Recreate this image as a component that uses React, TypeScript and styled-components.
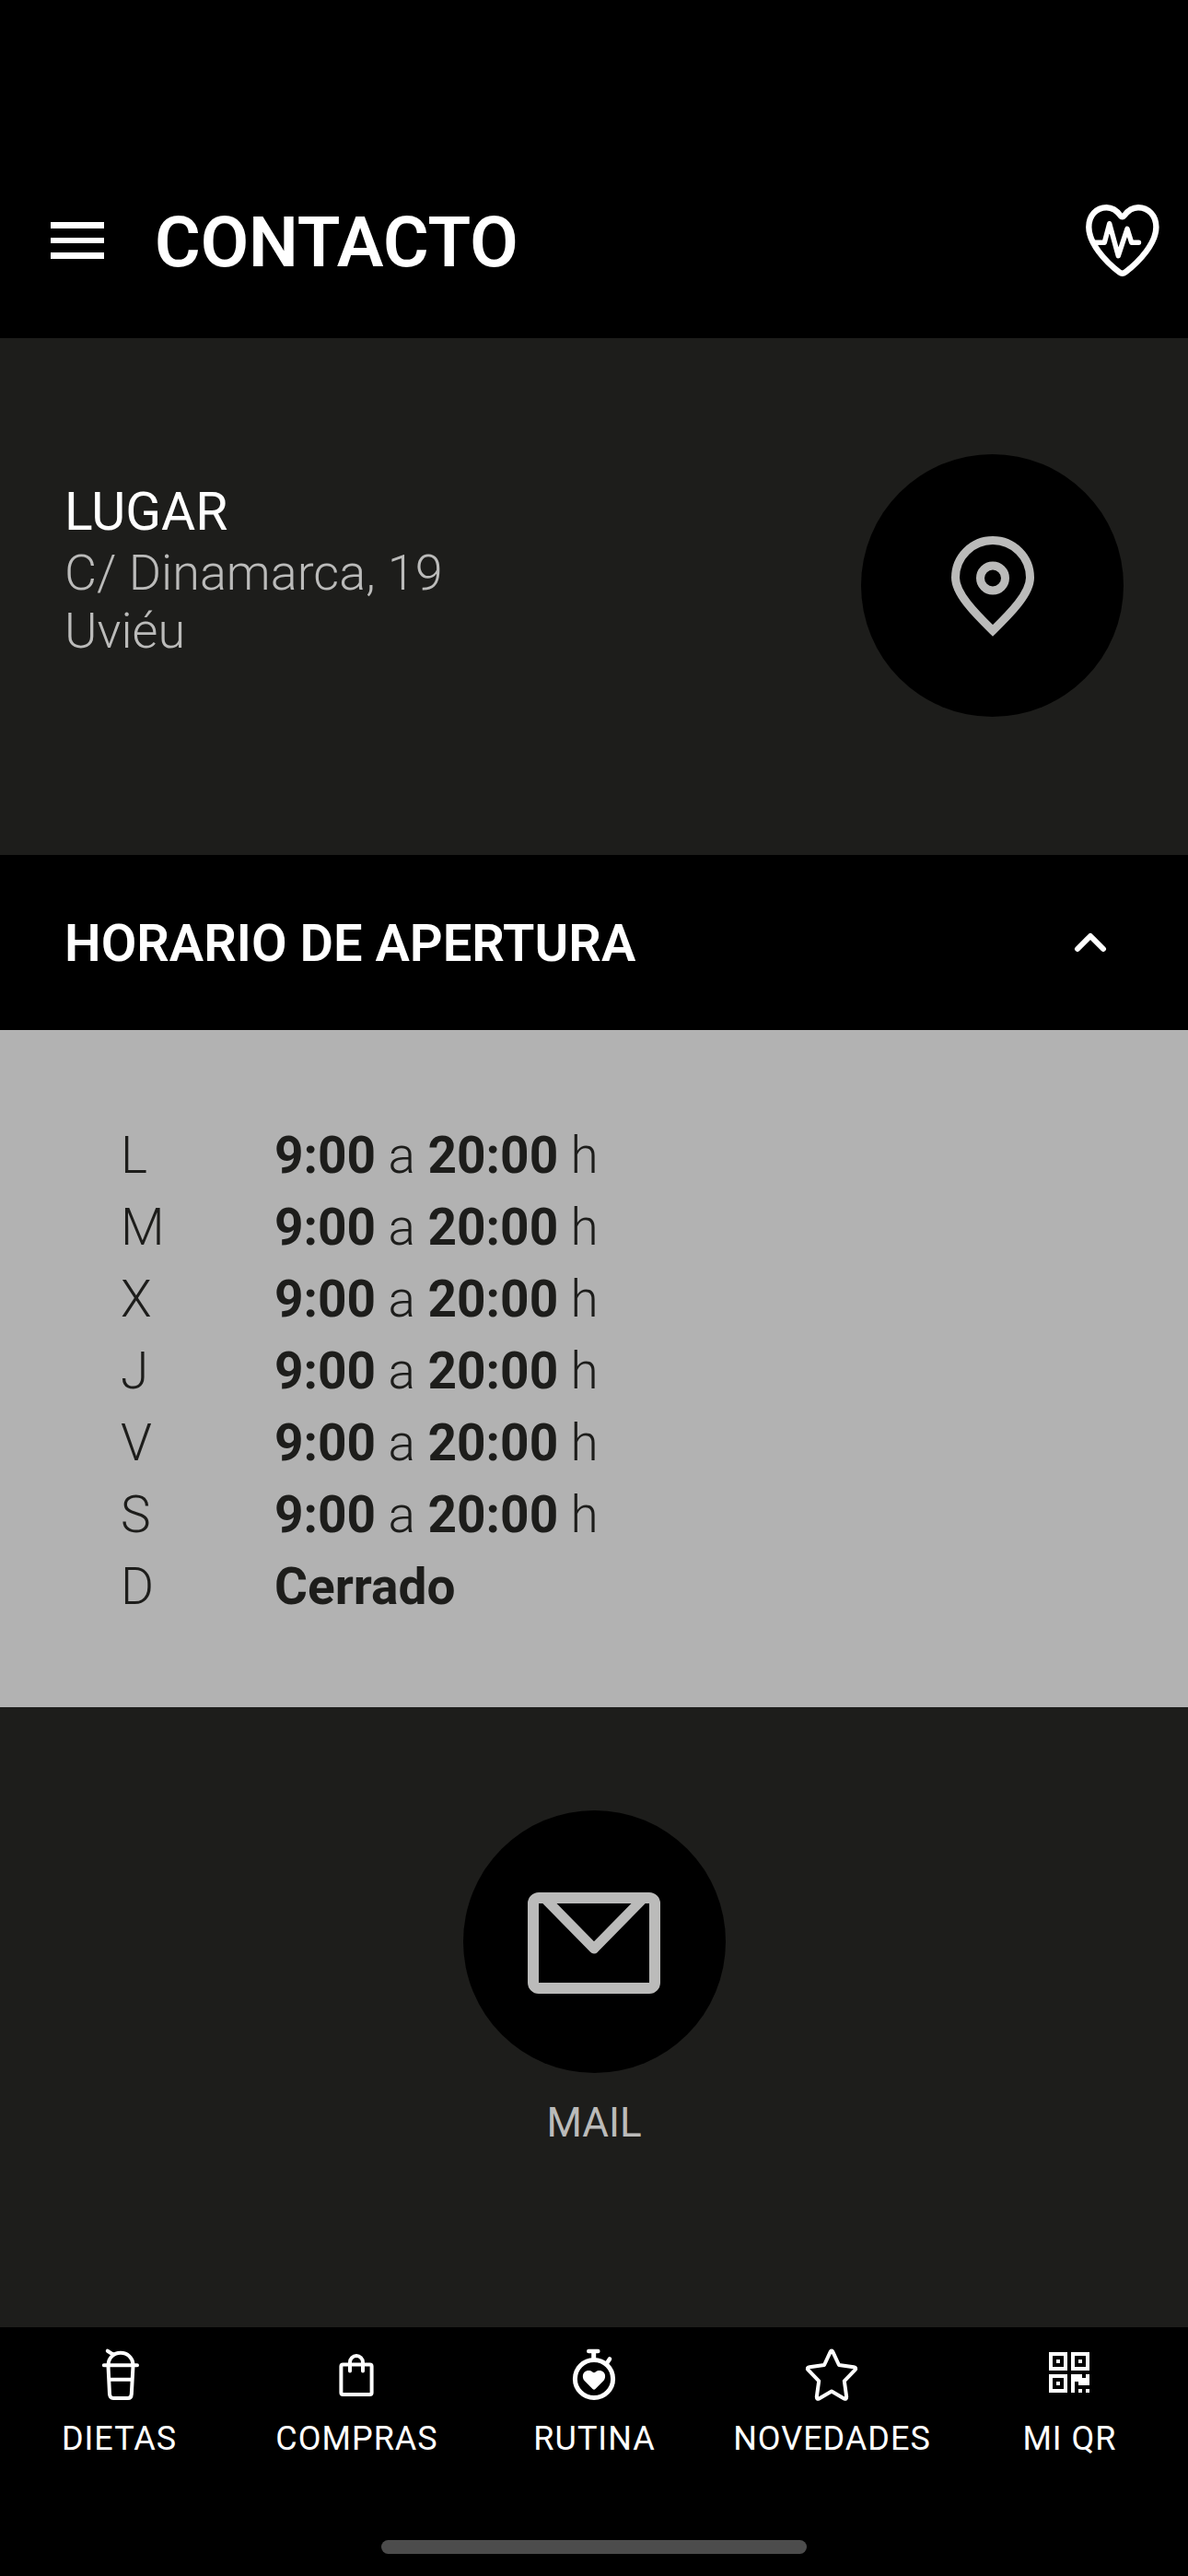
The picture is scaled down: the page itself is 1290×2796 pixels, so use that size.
import React, { useState } from "react";
import styled, { createGlobalStyle } from "styled-components";

const color = {
  black: "#000000",
  panel: "#1d1d1b",
  silver: "#b2b2b2",
  muted: "#bbbbba",
  white: "#ffffff",
  handle: "#4c4c4c",
};

const GlobalStyle = createGlobalStyle`
  *, *::before, *::after { box-sizing: border-box; }
  body {
    margin: 0;
    background: ${color.black};
    font-family: Roboto, "Open Sans", sans-serif;
  }
  button { font: inherit; color: inherit; background: none; border: 0; padding: 0; cursor: pointer; }
  a { color: inherit; text-decoration: none; }
  svg { display: block; flex: none; }
`;

const Screen = styled.div`
  display: flex;
  flex-direction: column;
  min-height: 100vh;
  background: ${color.panel};
`;

const Header = styled.header`
  display: flex;
  align-items: center;
  gap: 55px;
  padding: 207px 31px 52px 55px;
  background: ${color.black};
  color: ${color.white};
`;

const Title = styled.h1`
  flex: 1;
  margin: 0;
  padding-top: 4px;
  font-size: 76px;
  line-height: 104px;
  font-weight: 600;
`;

const Main = styled.main`
  flex: 1;
`;

const Place = styled.section`
  display: flex;
  align-items: flex-start;
  justify-content: space-between;
  padding: 126px 70px 150px;
`;

const PlaceText = styled.div`
  padding-top: 31px;
  font-size: 54px;
  line-height: 63px;
`;

const PlaceHeading = styled.h2`
  margin: 0 0 3px;
  font-size: 57px;
  font-weight: 400;
  color: ${color.white};
`;

const Address = styled.address`
  font-style: normal;
  font-weight: 300;
  color: ${color.muted};
`;

const Disc = styled.span`
  display: flex;
  align-items: center;
  justify-content: center;
  width: 285px;
  height: 285px;
  padding-top: 2px;
  border-radius: 50%;
  background: ${color.black};
  color: ${color.muted};
`;

const AccordionHeading = styled.h2`
  margin: 0;
  background: ${color.black};
`;

const AccordionButton = styled.button`
  display: flex;
  align-items: center;
  justify-content: space-between;
  width: 100%;
  padding: 60px 70px 58px;
  color: ${color.white};
  font-size: 56px;
  line-height: 72px;
  font-weight: 600;
  text-align: left;
`;

const Schedule = styled.div`
  padding: 97px 131px 92px;
  background: ${color.silver};
`;

const HoursTable = styled.table`
  border-collapse: collapse;
  color: ${color.panel};
  font-size: 55px;
  line-height: 78px;
  font-weight: 300;
`;

const Day = styled.th`
  width: 167px;
  padding: 0;
  font-weight: inherit;
  text-align: left;
`;

const Hours = styled.td`
  padding: 0;

  strong { font-weight: 700; }
`;

const Mail = styled.section`
  display: flex;
  justify-content: center;
  padding: 112px 70px;
`;

const MailLink = styled.a`
  display: flex;
  flex-direction: column;
  align-items: center;
  gap: 28px;
  color: ${color.muted};
  font-size: 44px;
  line-height: 52px;
`;

const Footer = styled.footer`
  padding: 21px 0 24px;
  background: ${color.black};
`;

const Tabs = styled.nav`
  display: grid;
  grid-template-columns: repeat(5, 1fr);
  margin-bottom: 88px;
`;

const Tab = styled.a`
  display: flex;
  flex-direction: column;
  align-items: center;
  gap: 18px;
  color: ${color.white};
  font-size: 36px;
  line-height: 44px;
  letter-spacing: 1px;
  text-indent: 1px;
`;

const HomeHandle = styled.div`
  width: 462px;
  height: 15px;
  margin: 0 auto;
  border-radius: 8px;
  background: ${color.handle};
`;

const MenuIcon = () => (
  <svg width="58" height="40" viewBox="0 0 58 40" fill="currentColor" aria-hidden="true">
    <path d="M0 0h58v7H0zM0 17h58v6H0zM0 33h58v7H0z" />
  </svg>
);

const HeartPulseIcon = () => (
  <svg width="80" height="80" viewBox="0 0 80 80" fill="none" stroke="currentColor" strokeLinecap="round" strokeLinejoin="round" aria-hidden="true">
    <path
      strokeWidth="6.4"
      d="M37.6 13C33 6.600 28.500 4.200 22.500 4.200 11.500 4.200 3.300 13 3.300 25.500 3.300 43 21 62.500 36.500 74.500Q39.700 77 42.900 74.500C58.500 62.500 76.400 43 76.400 25.500 76.400 13 68 4.200 57 4.200 51 4.200 46.400 6.600 41.800 13Q39.700 15.800 37.600 13Z"
    />
    <path strokeWidth="5.4" d="M9.500 42.300H20.300L25.700 21.700 35.300 56.700 45 27.300 49.700 42.300H57.500" />
  </svg>
);

const PinIcon = () => (
  <svg width="90" height="109" viewBox="0 0 90 109" fill="none" stroke="currentColor" strokeWidth="9" aria-hidden="true">
    <path d="M45 102.500C25 83 4.500 62 4.500 45a40.500 40.500 0 0 1 81 0C85.500 62 65 83 45 102.500Z" />
    <circle cx="45" cy="45.500" r="13.500" />
  </svg>
);

const MailIcon = () => (
  <svg width="144" height="110" viewBox="0 0 144 110" fill="none" stroke="currentColor" strokeWidth="11" strokeLinejoin="round" aria-hidden="true">
    <path
      fill="currentColor"
      stroke="none"
      fillRule="evenodd"
      d="M12 0H132A12 12 0 0 1 144 12V98A12 12 0 0 1 132 110H12A12 12 0 0 1 0 98V12A12 12 0 0 1 12 0ZM12 12V98H132V12Z"
    />
    <path d="M18 6 72 61 126 6" />
  </svg>
);

const Chevron = ({ open }: { open: boolean }) => (
  <svg width="72" height="72" viewBox="0 0 72 72" fill="none" stroke="currentColor" strokeWidth="6" strokeLinecap="round" strokeLinejoin="round" aria-hidden="true">
    <path d={open ? "M22 42 36 28 50 42" : "M22 28 36 42 50 28"} />
  </svg>
);

const TabIcon = ({ children }: { children: React.ReactNode }) => (
  <svg width="60" height="60" viewBox="0 0 60 60" fill="none" stroke="currentColor" strokeWidth="4" strokeLinecap="round" strokeLinejoin="round" aria-hidden="true">
    {children}
  </svg>
);

const CupIcon = () => (
  <TabIcon>
    <path d="M13.800 20.300H50M18.500 19.500C19 12 24.500 6.800 32 6.800S45 12 45.600 19.500M17.800 4.700 24 8.700" />
    <path d="M18.500 21 20 51.500Q20.300 56 24 56H40Q43.500 56 43.800 51.500L45.500 21M19.500 35.700H44.500" />
  </TabIcon>
);

const BagIcon = () => (
  <TabIcon>
    <rect x="13.400" y="19.400" width="33.200" height="32.600" rx="2" />
    <path d="M23 26.500V17a7 7 0 0 1 14 0v9.500" />
  </TabIcon>
);

const StopwatchIcon = () => (
  <TabIcon>
    <circle cx="30" cy="35" r="20.600" strokeWidth="5" />
    <path d="M24.300 5H34.300M47 13.500 43.800 18.200" strokeWidth="4.600" />
    <path d="M29.700 6V13" strokeWidth="5" />
    <path
      fill="currentColor"
      stroke="none"
      d="M28.500 46 19.600 37C17.300 34.500 17.300 30 19.600 27.700 22 25.300 26 25.400 28 27.300Q30 29.300 32 27.300C34 25.400 38 25.300 40.400 27.700 42.700 30 42.700 34.500 40.400 37L31.500 46Q30 47.500 28.500 46Z"
    />
  </TabIcon>
);

const StarIcon = () => (
  <TabIcon>
    <path d="M28.600 5.800Q30 3.200 31.400 5.800L38 20 54 22.300Q57.500 23 55.400 25.300L43.800 37.300 46.200 54.600Q46.200 57.600 43.600 56.400L30 48.600 16.400 56.400Q13.800 57.600 13.800 54.600L16.200 37.300 4.600 25.300Q2.500 23 6 22.300L22 20Z" />
  </TabIcon>
);

const QrIcon = () => (
  <TabIcon>
    <path
      fill="currentColor"
      stroke="none"
      fillRule="evenodd"
      d="M8 6h20v20H8zm4 4v12h12V10zm4 4h4v4h-4zM32 6h20v20H32zm4 4v12h12V10zm4 4h4v4h-4zM8 30h20v20H8zm4 4v12h12V34zm4 4h4v4h-4zM32 30h12v4h4v-4h4v12H40v-4h-4v12h-4zM40 46h4v4h-4zM48 46h4v4h-4z"
    />
  </TabIcon>
);

const openDays = ["L", "M", "X", "J", "V", "S"];

const tabs = [
  { label: "DIETAS", href: "#dietas", Icon: CupIcon },
  { label: "COMPRAS", href: "#compras", Icon: BagIcon },
  { label: "RUTINA", href: "#rutina", Icon: StopwatchIcon },
  { label: "NOVEDADES", href: "#novedades", Icon: StarIcon },
  { label: "MI QR", href: "#mi-qr", Icon: QrIcon },
];

export default function App() {
  const [open, setOpen] = useState(true);

  return (
    <>
      <GlobalStyle />
      <Screen>
        <Header>
          <button type="button" aria-label="Menú">
            <MenuIcon />
          </button>
          <Title>CONTACTO</Title>
          <button type="button" aria-label="Salud">
            <HeartPulseIcon />
          </button>
        </Header>

        <Main>
          <Place>
            <PlaceText>
              <PlaceHeading>LUGAR</PlaceHeading>
              <Address>
                C/ Dinamarca, 19
                <br />
                Uviéu
              </Address>
            </PlaceText>
            <a href="#mapa" aria-label="Ver en el mapa">
              <Disc>
                <PinIcon />
              </Disc>
            </a>
          </Place>

          <section>
            <AccordionHeading>
              <AccordionButton
                type="button"
                aria-expanded={open}
                aria-controls="horario"
                onClick={() => setOpen(!open)}
              >
                HORARIO DE APERTURA
                <Chevron open={open} />
              </AccordionButton>
            </AccordionHeading>
            <Schedule id="horario" hidden={!open}>
              <HoursTable>
                <tbody>
                  {openDays.map((day) => (
                    <tr key={day}>
                      <Day scope="row">{day}</Day>
                      <Hours>
                        <strong>9:00</strong> a <strong>20:00</strong> h
                      </Hours>
                    </tr>
                  ))}
                  <tr>
                    <Day scope="row">D</Day>
                    <Hours>
                      <strong>Cerrado</strong>
                    </Hours>
                  </tr>
                </tbody>
              </HoursTable>
            </Schedule>
          </section>

          <Mail>
            <MailLink href="#mail">
              <Disc>
                <MailIcon />
              </Disc>
              MAIL
            </MailLink>
          </Mail>
        </Main>

        <Footer>
          <Tabs aria-label="Secciones">
            {tabs.map(({ label, href, Icon }) => (
              <Tab key={label} href={href}>
                <Icon />
                {label}
              </Tab>
            ))}
          </Tabs>
          <HomeHandle />
        </Footer>
      </Screen>
    </>
  );
}
